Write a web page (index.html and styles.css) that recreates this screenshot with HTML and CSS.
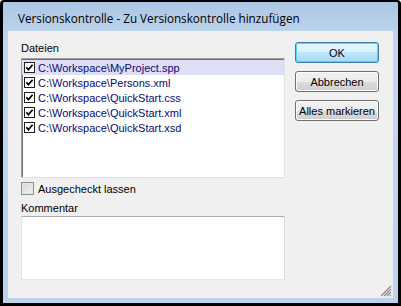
FILE: index.html
```html
<!DOCTYPE html>
<html lang="de">

<head>
    <meta charset="UTF-8">
    <meta name="viewport" content="width=device-width, initial-scale=1.0">
    <title>Versionskontrolle</title>
    <link rel="stylesheet" href="styles.css">
</head>

<body>

    <div class="window">
        <div class="titlebar">Versionskontrolle - Zu Versionskontrolle hinzufügen</div>

        <div class="client">
            <div class="main">
                <div class="label">Dateien</div>

                <div class="filelist">
                    <div class="file selected">
                        <svg class="check" width="11" height="11" viewBox="0 0 11 11"><rect x="0.5" y="0.5" width="10" height="10" fill="#fff" stroke="#1e1e1e"/><path d="M2.3 5.2 L4.4 7.6 L8.6 2.8" fill="none" stroke="#000" stroke-width="1.7"/></svg>
                        <span>C:\Workspace\MyProject.spp</span>
                    </div>
                    <div class="file">
                        <svg class="check" width="11" height="11" viewBox="0 0 11 11"><rect x="0.5" y="0.5" width="10" height="10" fill="#fff" stroke="#1e1e1e"/><path d="M2.3 5.2 L4.4 7.6 L8.6 2.8" fill="none" stroke="#000" stroke-width="1.7"/></svg>
                        <span>C:\Workspace\Persons.xml</span>
                    </div>
                    <div class="file">
                        <svg class="check" width="11" height="11" viewBox="0 0 11 11"><rect x="0.5" y="0.5" width="10" height="10" fill="#fff" stroke="#1e1e1e"/><path d="M2.3 5.2 L4.4 7.6 L8.6 2.8" fill="none" stroke="#000" stroke-width="1.7"/></svg>
                        <span>C:\Workspace\QuickStart.css</span>
                    </div>
                    <div class="file">
                        <svg class="check" width="11" height="11" viewBox="0 0 11 11"><rect x="0.5" y="0.5" width="10" height="10" fill="#fff" stroke="#1e1e1e"/><path d="M2.3 5.2 L4.4 7.6 L8.6 2.8" fill="none" stroke="#000" stroke-width="1.7"/></svg>
                        <span>C:\Workspace\QuickStart.xml</span>
                    </div>
                    <div class="file">
                        <svg class="check" width="11" height="11" viewBox="0 0 11 11"><rect x="0.5" y="0.5" width="10" height="10" fill="#fff" stroke="#1e1e1e"/><path d="M2.3 5.2 L4.4 7.6 L8.6 2.8" fill="none" stroke="#000" stroke-width="1.7"/></svg>
                        <span>C:\Workspace\QuickStart.xsd</span>
                    </div>
                </div>

                <div class="option">
                    <span class="box"></span>
                    <span>Ausgecheckt lassen</span>
                </div>

                <div class="label comment-label">Kommentar</div>
                <div class="comment"></div>
            </div>

            <div class="buttons">
                <button class="btn default">OK</button>
                <button class="btn">Abbrechen</button>
                <button class="btn">Alles markieren</button>
            </div>

            <!-- size grip in the corner -->
            <svg class="grip" width="12" height="12" viewBox="0 0 12 12">
                <path d="M11 1 L1 11 M11 4 L4 11 M11 7 L7 11 M11 10 L10 11" stroke="#8a8a8a" stroke-width="1.2"/>
            </svg>
        </div>
    </div>

</body>

</html>
```

FILE: styles.css
```css
body {
    margin: 0;
    background: #fff;
    font-family: 'Liberation Sans', Arial, sans-serif;
    font-size: 11px;
}

.window {
    width: 401px;
    height: 306px;
    box-sizing: border-box;
    border: 3px solid #000;
    border-top-width: 2px;
    border-radius: 4px 4px 0 0;
    background: linear-gradient(#abc6e4, #c2d7ee 40px, #bcd3ec);
    padding: 0 5px 5px;
    display: flex;
    flex-direction: column;
}

/* Title bar */
.titlebar {
    height: 29px;
    padding-left: 10px;
    display: flex;
    align-items: center;
    padding-top: 2px;
    box-sizing: border-box;
    font-family: 'Open Sans', 'Noto Sans', sans-serif;
    font-size: 11.7px;
    color: #000;
}

.client {
    position: relative;
    flex: 1;
    background: #f0f0f0;
    display: flex;
    gap: 10px;
    padding: 11px 14px 0 13px;
}

.main {
    width: 264px;
    display: flex;
    flex-direction: column;
}

.label {
    line-height: 13px;
    height: 13px;
    margin-bottom: 3px;
    color: #000;
}

/* File list */
.filelist {
    height: 120px;
    box-sizing: border-box;
    background: #fff;
    border: 1px solid;
    border-color: #a0a0a0 #e3e3e3 #e3e3e3 #a0a0a0;
    box-shadow: inset 1px 1px 0 #6e6e6e;
    padding-top: 1px;
}

.file {
    height: 15px;
    display: flex;
    align-items: center;
    gap: 3px;
    padding-left: 2px;
    color: #0a0a78;
}

.file.selected {
    background: #dedef7;
}

.check {
    display: block;
    flex: none;
}

/* Ausgecheckt lassen */
.option {
    display: flex;
    align-items: center;
    gap: 4px;
    height: 13px;
    margin-top: 4px;
    color: #000;
}

.box {
    width: 11px;
    height: 11px;
    border: 1px solid #8f8f8f;
    background: linear-gradient(135deg, #d6d6d6, #f4f4f4);
    box-shadow: inset 0 0 0 1px #e6e6e6;
}

.comment-label {
    margin-top: 7px;
    margin-bottom: 1px;
}

.comment {
    height: 64px;
    box-sizing: border-box;
    background: #fff;
    border: 1px solid;
    border-color: #abadb3 #dbdfe6 #e3e9ef #e2e3ea;
}

/* Buttons */
.buttons {
    width: 84px;
    display: flex;
    flex-direction: column;
    gap: 8px;
}

.btn {
    height: 21px;
    padding: 0;
    font-family: 'Liberation Sans', Arial, sans-serif;
    font-size: 11px;
    color: #000;
    border: 1px solid #707070;
    border-radius: 3px;
    background: linear-gradient(#f2f2f2 0%, #ebebeb 50%, #dddddd 50%, #cfcfcf 100%);
    box-shadow: inset 0 0 0 1px #fcfcfc;
}

.btn.default {
    border-color: #3c7fb1;
    background: linear-gradient(#eaf6fd 0%, #d9f0fc 50%, #bee6fd 50%, #a7d9f5 100%);
    box-shadow: inset 0 0 0 1px #48d8fb;
}

.grip {
    position: absolute;
    right: 1px;
    bottom: 1px;
}
```
